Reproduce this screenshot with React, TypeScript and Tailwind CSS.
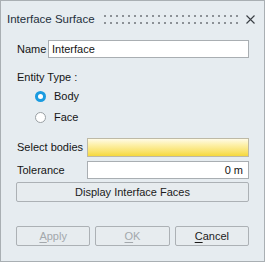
import { useState } from 'react';

const font = { fontFamily: '"Liberation Sans", Arial, sans-serif' };

function Radio({ checked, label, onClick }: { checked: boolean; label: string; onClick: () => void }) {
  return (
    <div className="flex items-center h-[21px] cursor-default" onClick={onClick}>
      {checked ? (
        <span className="w-[11px] h-[11px] rounded-full bg-[#1a9be0] flex items-center justify-center">
          <span className="w-[5px] h-[5px] rounded-full bg-white" />
        </span>
      ) : (
        <span className="w-[11px] h-[11px] rounded-full bg-white border border-[#9aa0a4]" />
      )}
      <span className="ml-[8px]">{label}</span>
    </div>
  );
}

function Btn({ children, disabled, className = '' }: { children: React.ReactNode; disabled?: boolean; className?: string }) {
  return (
    <button
      className={`h-[20px] border border-[#acb1b5] rounded-[2px] bg-[#e7ecef] text-[11px] leading-none ${disabled ? 'text-[#a3a8ac]' : 'text-[#1b1b1b]'} ${className}`}
    >
      {children}
    </button>
  );
}

export default function App() {
  const [entity, setEntity] = useState<'body' | 'face'>('body');

  return (
    <div
      className="w-[265px] h-[262px] border border-[#a9afb3] bg-[#e6ecf0] flex flex-col text-[11px] text-[#151515]"
      style={font}
    >
      {/* title bar */}
      <div className="h-[37px] flex items-center pl-[6px] pr-[9px] shrink-0">
        <span className="text-[#24303c] text-[11.5px] whitespace-nowrap">Interface Surface</span>
        <div className="flex-1" />
        <div className="mr-[8px] flex gap-[4px]">
          {Array.from({ length: 23 }).map((_, i) => (
            <div key={i} className="flex flex-col gap-[5px]">
              <span className="w-[2px] h-[2px] bg-[#8c9196]" />
              <span className="w-[2px] h-[2px] bg-[#8c9196]" />
            </div>
          ))}
        </div>
        <svg width="9" height="9" viewBox="0 0 9 9" className="mt-[-1px]">
          <path d="M0.5 0.5 L8.5 8.5 M8.5 0.5 L0.5 8.5" stroke="#3a3f44" strokeWidth="1.1" fill="none" />
        </svg>
      </div>

      <div className="flex flex-col px-[15px]">
        {/* name */}
        <div className="flex items-center h-[18px] mt-[2px]">
          <span className="w-[32px] pl-[1px]">Name</span>
          <div className="flex-1 h-[18px] bg-white border border-[#a9aeb2] flex items-center pl-[3px]">
            Interface
          </div>
        </div>

        {/* entity type */}
        <div className="mt-[12px] pl-[1px] leading-[14px]">Entity Type :</div>
        <div className="flex flex-col pl-[19px] mt-[2px]">
          <Radio checked={entity === 'body'} label="Body" onClick={() => setEntity('body')} />
          <Radio checked={entity === 'face'} label="Face" onClick={() => setEntity('face')} />
        </div>

        {/* select bodies */}
        <div className="flex items-center h-[19px] mt-[10px]">
          <span className="w-[71px] shrink-0 pl-[1px] whitespace-nowrap">Select bodies</span>
          <div className="flex-1 h-[19px] border border-[#bdb9a6] bg-[linear-gradient(to_bottom,#fffbe6,#fdf0a8_35%,#f9e26a_75%,#f5d83c)]" />
        </div>

        {/* tolerance */}
        <div className="flex items-center h-[18px] mt-[4px]">
          <span className="w-[71px] shrink-0 pl-[1px]">Tolerance</span>
          <div className="flex-1 h-[18px] bg-white border border-[#a9aeb2] flex items-center justify-end pr-[5px]">
            0 m
          </div>
        </div>

        <Btn className="mt-[3px] w-full">Display Interface Faces</Btn>

        {/* actions */}
        <div className="flex gap-[5px] mt-[24px]">
          <Btn disabled className="flex-1">
            <span className="underline underline-offset-2">A</span>pply
          </Btn>
          <Btn disabled className="flex-1">
            <span className="underline underline-offset-2">O</span>K
          </Btn>
          <Btn className="flex-1">
            <span className="underline underline-offset-2">C</span>ancel
          </Btn>
        </div>
      </div>
    </div>
  );
}
